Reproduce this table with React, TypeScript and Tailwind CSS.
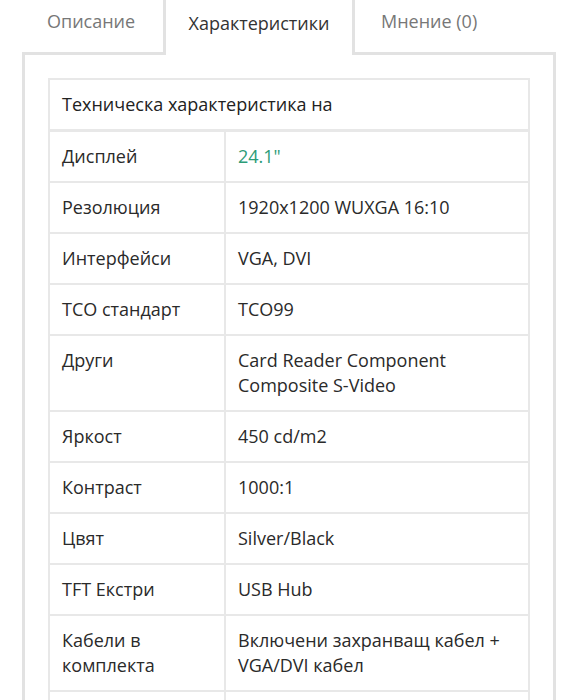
import React from 'react';

const rows: { label: string[]; value: string[]; green?: boolean }[] = [
    { label: ['Дисплей'], value: ['24.1"'], green: true },
    { label: ['Резолюция'], value: ['1920x1200 WUXGA 16:10'] },
    { label: ['Интерфейси'], value: ['VGA, DVI'] },
    { label: ['TCO стандарт'], value: ['TCO99'] },
    { label: ['Други'], value: ['Card Reader Component', 'Composite S-Video'] },
    { label: ['Яркост'], value: ['450 cd/m2'] },
    { label: ['Контраст'], value: ['1000:1'] },
    { label: ['Цвят'], value: ['Silver/Black'] },
    { label: ['TFT Екстри'], value: ['USB Hub'] },
    { label: ['Кабели в', 'комплекта'], value: ['Включени захранващ кабел +', 'VGA/DVI кабел'] },
];

export default function App() {
    return (
        <div className="min-h-[700px] bg-white font-['Open_Sans',sans-serif] text-[18px] leading-[25px] text-[#2a2a2a]">
            {/* Tabs */}
            <div className="flex h-[52px] pl-[22px]">
                <div className="w-[141px] pl-[25px] pt-[9px] text-[#777]">Описание</div>
                <div className="relative z-10 h-[55px] w-[192px] border-x-[3px] border-[#e2e2e2] bg-white pt-[11px] text-center text-[#333]">
                    Характеристики
                </div>
                <div className="pl-[26px] pt-[9px] text-[#777]">Мнение (0)</div>
            </div>

            {/* Panel */}
            <div className="mx-[22px] border-[3px] border-[#e2e2e2] px-[23px] pt-[23px] pb-[40px]">
                <table className="w-full border-collapse">
                    <thead>
                        <tr>
                            <th
                                colSpan={2}
                                className="border-x-2 border-t-2 border-b-[3px] border-[#e8e8e8] px-3 py-3 text-left font-normal text-[#222]"
                            >
                                Техническа характеристика на
                            </th>
                        </tr>
                    </thead>
                    <tbody>
                        {rows.map((r) => (
                            <tr key={r.label.join(' ')}>
                                <td className="w-[176px] border-2 border-[#e8e8e8] px-3 py-3 align-top">
                                    {r.label.map((l) => (
                                        <div key={l}>{l}</div>
                                    ))}
                                </td>
                                <td className={`border-2 border-[#e8e8e8] px-3 py-3 align-top ${r.green ? 'text-[#2c9c77]' : ''}`}>
                                    {r.value.map((v) => (
                                        <div key={v}>{v}</div>
                                    ))}
                                </td>
                            </tr>
                        ))}
                        {/* next row starts at the bottom edge */}
                        <tr>
                            <td className="h-[51px] border-2 border-[#e8e8e8]" />
                            <td className="h-[51px] border-2 border-[#e8e8e8]" />
                        </tr>
                    </tbody>
                </table>
            </div>
        </div>
    );
}
